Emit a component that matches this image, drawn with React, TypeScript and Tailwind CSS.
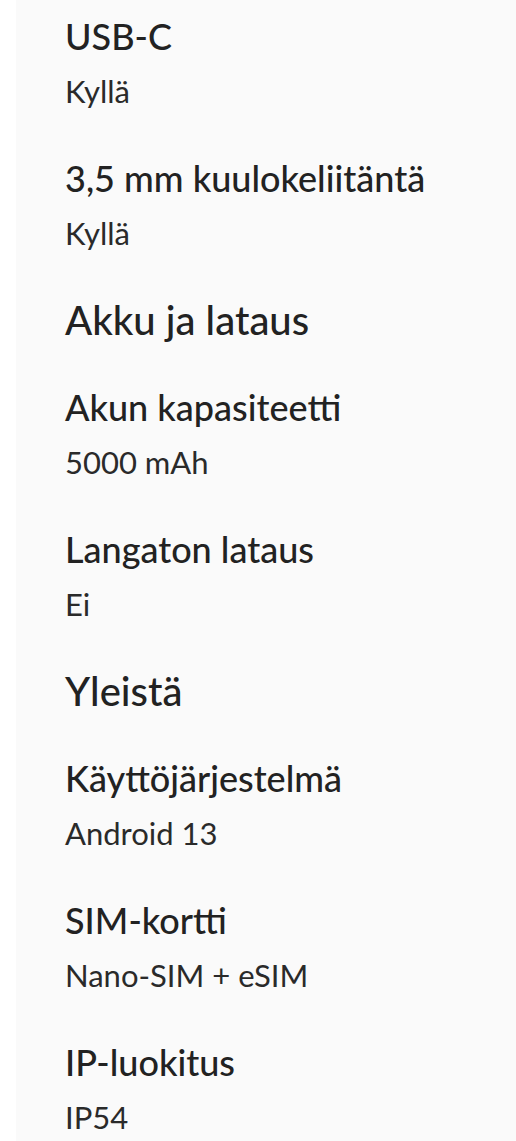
const sections: { heading?: string; rows: { label: string; value: string }[] }[] = [
  {
    rows: [
      { label: "USB-C", value: "Kyllä" },
      { label: "3,5 mm kuulokeliitäntä", value: "Kyllä" },
    ],
  },
  {
    heading: "Akku ja lataus",
    rows: [
      { label: "Akun kapasiteetti", value: "5000 mAh" },
      { label: "Langaton lataus", value: "Ei" },
    ],
  },
  {
    heading: "Yleistä",
    rows: [
      { label: "Käyttöjärjestelmä", value: "Android 13" },
      { label: "SIM-kortti", value: "Nano-SIM + eSIM" },
      { label: "IP-luokitus", value: "IP54" },
    ],
  },
];

const App = () => {
  return (
    <div className="min-h-screen bg-white pl-4 font-['Lato',sans-serif]">
      <div className="flex min-h-screen flex-col gap-[32px] bg-[#fafafa] pl-[49px] pt-[9px] text-[#222]">
        {sections.map((section, i) => (
          <div key={i} className="contents">
            {section.heading && (
              <h2 className="h-[55px] text-[40px] leading-[55px] font-medium">
                {section.heading}
              </h2>
            )}
            {section.rows.map((row) => (
              <div key={row.label}>
                <p className="h-[55px] text-[36px] leading-[55px] font-medium">
                  {row.label}
                </p>
                <p className="h-[55px] text-[31px] leading-[55px] text-[#2a2a2a]">
                  {row.value}
                </p>
              </div>
            ))}
          </div>
        ))}
      </div>
    </div>
  );
};

export default App;
